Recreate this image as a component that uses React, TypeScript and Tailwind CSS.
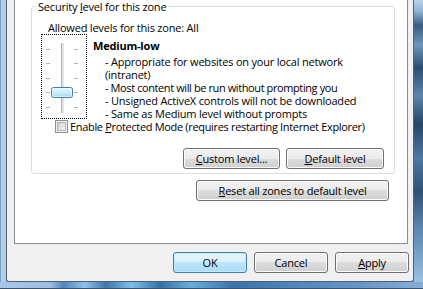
import type { ReactNode } from "react";

function Btn({
  children,
  className = "",
  primary = false,
}: {
  children: ReactNode;
  className?: string;
  primary?: boolean;
}) {
  return (
    <div
      className={`flex h-[21px] items-center justify-center rounded-[3px] border ${
        primary
          ? "border-[#3c7fb1] bg-[linear-gradient(#e8f6fd_0%,#d9f0fc_50%,#bee6fd_50%,#a9dbf6_100%)] shadow-[inset_0_0_0_1px_#c4ecfd]"
          : "border-[#707070] bg-[linear-gradient(#f2f2f2_0%,#ebebeb_50%,#dddddd_50%,#cfcfcf_100%)] shadow-[inset_0_0_0_1px_#fcfcfc]"
      } ${className}`}
    >
      {children}
    </div>
  );
}

function Slider() {
  const ticks = [14, 28, 43, 57, 72];
  return (
    <div className="h-[85px] w-[46px] shrink-0 border border-dotted border-black">
      <svg width="44" height="83" viewBox="0 0 44 83" className="block">
        <defs>
          <linearGradient id="thumb" x1="0" y1="0" x2="0" y2="1">
            <stop offset="0" stopColor="#e9f7fe" />
            <stop offset="0.5" stopColor="#cdecfb" />
            <stop offset="1" stopColor="#9fd6f3" />
          </linearGradient>
        </defs>
        {ticks.map((y) => (
          <g key={y}>
            <rect x="4" y={y} width="4" height="1" fill="#b4b4b4" />
            <rect x="32" y={y} width="4" height="1" fill="#b4b4b4" />
          </g>
        ))}
        <rect x="19" y="8" width="1" height="70" fill="#b0b0b0" />
        <rect x="20" y="8" width="2" height="70" fill="#e4e4e4" />
        <rect x="22" y="8" width="1" height="70" fill="#ffffff" />
        <rect x="9.5" y="52.5" width="21" height="10" rx="2" fill="url(#thumb)" stroke="#3c7fb1" />
        <rect x="10.5" y="53.5" width="19" height="8" rx="1" fill="none" stroke="#f4fbff" strokeOpacity="0.7" />
      </svg>
    </div>
  );
}

function Checkbox() {
  return (
    <div className="flex h-[13px] w-[13px] shrink-0 items-center justify-center border border-[#8e8f8f] bg-[#f4f4f4]">
      <div className="h-[9px] w-[9px] border border-[#b0b4ba] bg-[linear-gradient(135deg,#c9cdd3_0%,#e4e6e9_55%,#f7f7f7_100%)]" />
    </div>
  );
}

export default function App() {
  return (
    <div className="flex h-[289px] w-[423px] flex-col overflow-hidden bg-[#6f99c4] font-['Open_Sans','Noto_Sans',sans-serif] text-[11px] leading-[13px] tracking-[-0.2px] text-black">
      <div className="flex min-h-0 flex-1">
        {/* left frame */}
        <div className="w-[6px] shrink-0 border-l border-[#7f9dbd] bg-[#b0cdea]" />

        <div className="flex min-w-0 flex-1 flex-col rounded-b-[3px] border-x border-b border-[#52606f] bg-[#f0f0f0] pb-[8px] pl-[7px] pr-[4px]">
          <div className="mr-[1px] flex h-[244px] shrink-0 flex-col border-x border-b border-[#898c95] bg-white">
            <fieldset className="ml-[16px] mr-[12px] rounded-[3px] border border-[#d5dfe5]">
              <legend className="ml-[4px] px-[2px]">
                Security <u className="underline-offset-[1px]">l</u>evel for this zone
              </legend>
              <div className="flex flex-col pb-[4px] pl-[9px] pr-[10px]">
                <div className="mt-[8px] pl-[7px]">Allowed levels for this zone: All</div>
                <div className="flex">
                  <Slider />
                  <div className="ml-[6px] flex flex-col pt-[5px]">
                    <div className="font-bold">Medium-low</div>
                    <div className="mt-[3px] flex flex-col pl-[12px]">
                      <div>- Appropriate for websites on your local network</div>
                      <div>(intranet)</div>
                      <div className="tracking-[-0.4px]">- Most content will be run without prompting you</div>
                      <div>- Unsigned ActiveX controls will not be downloaded</div>
                      <div>- Same as Medium level without prompts</div>
                    </div>
                  </div>
                </div>
                <div className="flex items-center pl-[14px]">
                  <Checkbox />
                  <span className="ml-[2px] tracking-[-0.33px]">
                    Enable <u className="underline-offset-[1px]">P</u>rotected Mode (requires restarting Internet Explorer)
                  </span>
                </div>
                <div className="mt-[15px] flex justify-end gap-[6px]">
                  <Btn className="w-[97px]">
                    <span>
                      <u className="underline-offset-[1px]">C</u>ustom level...
                    </span>
                  </Btn>
                  <Btn className="w-[98px]">
                    <span>
                      <u className="underline-offset-[1px]">D</u>efault level
                    </span>
                  </Btn>
                </div>
              </div>
            </fieldset>
            <div className="mt-[6px] flex justify-end pr-[18px]">
              <Btn className="w-[193px]">
                <span>
                  <u className="underline-offset-[1px]">R</u>eset all zones to default level
                </span>
              </Btn>
            </div>
          </div>

          <div className="mt-[8px] flex justify-end gap-[7px]">
            <Btn primary className="w-[74px]">
              OK
            </Btn>
            <Btn className="w-[74px]">Cancel</Btn>
            <Btn className="w-[74px]">
              <span>
                <u className="underline-offset-[1px]">A</u>pply
              </span>
            </Btn>
          </div>
        </div>

        {/* right frame */}
        <div className="w-[9px] shrink-0 bg-[linear-gradient(#b9d3ec_0%,#8fb1d3_4%,#3b5c80_9%,#6e95bb_16%,#2d4d70_24%,#5d85ad_34%,#264567_44%,#4f78a2_56%,#2f5075_68%,#5a82ab_80%,#7ea6cc_92%,#9cc0e2_100%)]" />
      </div>
      {/* bottom frame */}
      <div className="h-[7px] shrink-0 border-b border-[#3d536b] bg-[linear-gradient(90deg,#a9c8e8_0%,#9cbee2_12%,#4f86bd_15%,#8dc6ea_20%,#3d77b0_25%,#7ec0e8_31%,#3470aa_38%,#69aede_45%,#3a74ad_55%,#4f88c0_70%,#6796c6_85%,#86aed6_100%)]" />
    </div>
  );
}
